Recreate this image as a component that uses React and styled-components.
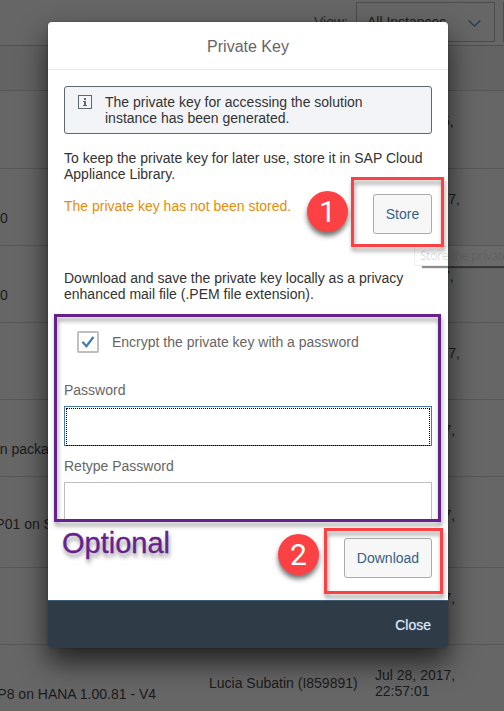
import React from 'react';
import styled, { createGlobalStyle } from 'styled-components';

const Global = createGlobalStyle`
  * { box-sizing: border-box; }
  body { margin: 0; background: #666; overflow: hidden; }
`;

const Page = styled.div`
  position: relative;
  width: 504px;
  height: 711px;
  overflow: hidden;
  background: #666;
  color: #1a1a1a;
  font: 14px/16px 'Liberation Sans', Arial, sans-serif;
`;

const Toolbar = styled.header`
  display: flex;
  height: 46px;
  padding: 2px 0 0 314px;
  border-bottom: 1px solid #505050;
`;
const ViewLabel = styled.span`
  flex: none;
  width: 42px;
  padding-top: 12px;
  color: #292929;
`;
const Select = styled.div`
  display: flex;
  flex: none;
  justify-content: space-between;
  width: 139px;
  height: 40px;
  padding: 11px 13px 0 10px;
  border: 1px solid #4c4c4c;
  svg { margin-top: 1px; }
`;
const NextField = styled.div`
  flex: none;
  width: 40px;
  height: 40px;
  margin-left: 8px;
  border: 1px solid #4c4c4c;
`;
const HeadRow = styled.div`
  height: 45px;
  background: #636363;
  border-bottom: 1px solid #575757;
`;
const Row = styled.div`
  display: grid;
  grid-template-columns: 209px 166px 129px;
  height: ${(p) => p.$h}px;
  border-bottom: 1px solid #575757;
`;
const Solution = styled.div`
  padding-top: ${(p) => p.$top}px;
  margin-left: ${(p) => p.$shift}px;
  white-space: nowrap;
`;
const Owner = styled.div`
  padding-top: 30px;
`;
const Created = styled.div`
  padding-top: ${(p) => p.$top}px;
  white-space: pre-line;
`;

const Dialog = styled.section`
  position: absolute;
  left: 48px;
  top: 22px;
  display: flex;
  flex-direction: column;
  width: 400px;
  height: 626px;
  border-radius: 4px;
  color: #333;
  box-shadow: 0 14px 28px rgba(0, 0, 0, 0.68), 0 0 2px rgba(0, 0, 0, 0.3);
`;
const Title = styled.h1`
  height: 48px;
  margin: 0;
  border-bottom: 1px solid #e5e5e5;
  border-radius: 4px 4px 0 0;
  background: #fff;
  color: #666;
  font-size: 16px;
  font-weight: 400;
  line-height: 49px;
  text-align: center;
`;
const Body = styled.div`
  display: flex;
  flex: 1;
  flex-direction: column;
  padding: 16px 16px 0;
  background: #fff;
`;
const Message = styled.div`
  display: flex;
  gap: 13px;
  height: 48px;
  padding: 7px 13px;
  border: 1px solid #5e696e;
  border-radius: 3px;
  background: #f2f4f7;
  svg { flex: none; margin-top: 1px; }
`;
const Paragraph = styled.p`
  margin: ${(p) => p.$gap}px 0 0;
`;
const StoreRow = styled.div`
  display: flex;
  justify-content: space-between;
  height: 52px;
  margin-top: 12px;
`;
const Warning = styled.span`
  padding-top: 4px;
  color: #e78c07;
`;
const Button = styled.button`
  width: ${(p) => p.$w}px;
  height: 40px;
  padding: 0;
  border: 1px solid #ababab;
  border-radius: 3px;
  background: #f7f7f7;
  color: #346187;
  font: inherit;
`;
const CheckRow = styled.label`
  display: flex;
  align-items: center;
  gap: 13px;
  height: 22px;
  margin: 29px 0 0 13px;
  color: #666;
`;
const CheckBox = styled.span`
  display: flex;
  width: 22px;
  height: 22px;
  border: 2px solid #bfbfbf;
  border-radius: 2px;
`;
const FieldLabel = styled.label`
  margin-top: ${(p) => p.$gap}px;
  color: #666;
`;
const FocusedField = styled.div`
  height: 40px;
  margin-top: 8px;
  padding: 1px;
  border: 1px solid #427cac;
  &::before {
    content: '';
    display: block;
    height: 100%;
    border: 1px dotted #000;
  }
`;
const ClippedField = styled.div`
  height: 38px;
  margin-top: 8px;
  border: 1px solid #bfbfbf;
  border-bottom: 0;
`;
const DownloadRow = styled.div`
  display: flex;
  justify-content: flex-end;
  margin-top: 18px;
`;
const Footer = styled.footer`
  display: flex;
  align-items: center;
  justify-content: flex-end;
  height: 48px;
  padding: 1px 17px 0 0;
  border-top: 1px solid #3f5f76;
  border-radius: 0 0 4px 4px;
  background: #2f3c48;
  color: #d5e8f8;
  text-shadow: 0 0 1px rgba(213, 232, 248, 0.6);
`;

const Outline = styled.div`
  position: absolute;
  left: ${(p) => p.$x}px;
  top: ${(p) => p.$y}px;
  width: ${(p) => p.$w}px;
  height: ${(p) => p.$h}px;
  border: 3px solid ${(p) => p.$color};
  filter: drop-shadow(1px 4px 2px rgba(0, 0, 0, 0.38));
`;
const Badge = styled.div`
  position: absolute;
  left: ${(p) => p.$x}px;
  top: ${(p) => p.$y}px;
  width: 41px;
  height: 41px;
  border-radius: 50%;
  background: #fc4144;
  box-shadow: 0 4px 5px rgba(0, 0, 0, 0.55);
  color: #fff;
  font-family: Roboto, 'Liberation Sans', sans-serif;
  font-size: 30px;
  line-height: 41px;
  text-align: center;
`;
const OptionalNote = styled.div`
  position: absolute;
  left: 62px;
  top: 527px;
  color: #66228c;
  font-size: 29px;
  line-height: 33px;
  -webkit-text-stroke: 0.3px #66228c;
  text-shadow: 1px 4px 4px rgba(0, 0, 0, 0.45);
`;
const Tooltip = styled.div`
  position: absolute;
  left: 414px;
  top: 246px;
  width: 110px;
  height: 20px;
  padding-left: 5px;
  border: 1px solid rgba(120, 120, 120, 0.12);
  background: rgba(255, 255, 255, 0.03);
  color: rgba(50, 50, 50, 0.19);
  font: 12px/18px 'Open Sans', 'Noto Sans', sans-serif;
  letter-spacing: -0.3px;
  white-space: nowrap;
  box-shadow: 8px 2px 1px 0 rgba(0, 0, 0, 0.45);
`;

const rows = [
  { h: 78, date: 'Feb 6, 2015,' },
  { h: 77, date: 'Jun 28, 2017,', text: '0', shift: 0 },
  { h: 77, date: 'Feb 6, 2017,', text: '0', shift: 0 },
  { h: 77, date: 'Jun 28, 2017,' },
  { h: 77, date: 'Jul 28, 2017,', text: 'on package', shift: -8 },
  { h: 91, date: 'Jul 28, 2017,', text: 'SP01 on SAP', shift: -14, top: 39, dateTop: 30 },
  { h: 77, date: 'Jul 28, 2017,' },
  { h: 77, date: 'Jul 28, 2017,\n22:57:01', text: 'SP8 on HANA 1.00.81 - V4', shift: -12, owner: 'Lucia Subatin (I859891)' },
];

const InfoIcon = () => (
  <svg width="14" height="14" viewBox="0 0 14 14" fill="#5e696e">
    <path d="M0 0h14v14H0zM1 1v12h12V1z" fillRule="evenodd" />
    <path d="M6 3h2v2H6zM5 6h3v4h1v1H5v-1h1V7H5z" />
  </svg>
);

export default function App() {
  return (
    <Page>
      <Global />
      <Toolbar>
        <ViewLabel>View:</ViewLabel>
        <Select>
          All Instances
          <svg width="13" height="16" viewBox="0 0 13 16" fill="none" stroke="#213a50" strokeWidth="1.2">
            <path d="M.7 5.5l5.8 5.6 5.8-5.6" />
          </svg>
        </Select>
        <NextField />
      </Toolbar>
      <HeadRow />
      {rows.map((r, i) => (
        <Row key={i} $h={r.h}>
          <Solution $top={r.top ?? 41} $shift={r.shift ?? 0}>{r.text}</Solution>
          <Owner>{r.owner}</Owner>
          <Created $top={r.dateTop ?? 22}>{r.date}</Created>
        </Row>
      ))}

      <Dialog>
        <Title>Private Key</Title>
        <Body>
          <Message>
            <InfoIcon />
            <span>The private key for accessing the solution<br />instance has been generated.</span>
          </Message>
          <Paragraph $gap={16}>To keep the private key for later use, store it in SAP Cloud<br />Appliance Library.</Paragraph>
          <StoreRow>
            <Warning>The private key has not been stored.</Warning>
            <Button $w={59}>Store</Button>
          </StoreRow>
          <Paragraph $gap={24}>Download and save the private key locally as a privacy<br />enhanced mail file (.PEM file extension).</Paragraph>
          <CheckRow>
            <CheckBox>
              <svg width="18" height="18" viewBox="0 0 18 18" fill="none" stroke="#427cac" strokeWidth="2.2">
                <path d="M3.4 8.8l4 4.4 7-9.2" />
              </svg>
            </CheckBox>
            Encrypt the private key with a password
          </CheckRow>
          <FieldLabel $gap={29}>Password</FieldLabel>
          <FocusedField />
          <FieldLabel $gap={12}>Retype Password</FieldLabel>
          <ClippedField />
          <DownloadRow>
            <Button $w={88}>Download</Button>
          </DownloadRow>
        </Body>
        <Footer>Close</Footer>
      </Dialog>

      <Tooltip>Store the private key</Tooltip>
      <Outline $x={54} $y={314} $w={387} $h={208} $color="#66228c" />
      <Outline $x={351} $y={177} $w={93} $h={70} $color="#fc4144" />
      <Outline $x={324} $y={528} $w={119} $h={66} $color="#fc4144" />
      <Badge $x={307} $y={191}>1</Badge>
      <Badge $x={278} $y={534}>2</Badge>
      <OptionalNote>Optional</OptionalNote>
    </Page>
  );
}
